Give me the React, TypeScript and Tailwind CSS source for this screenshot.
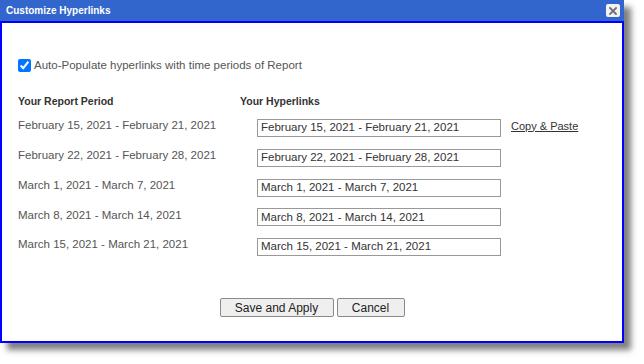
// Dialogo "Customize Hyperlinks": periodos del reporte y sus hipervinculos.

const PERIODS = [
  'February 15, 2021 - February 21, 2021',
  'February 22, 2021 - February 28, 2021',
  'March 1, 2021 - March 7, 2021',
  'March 8, 2021 - March 14, 2021',
  'March 15, 2021 - March 21, 2021',
]

export default function App() {
  return (
    <div
      className="w-[644px] h-[364px] bg-white"
      style={{ fontFamily: '"Liberation Sans", Arial, sans-serif' }}
    >
      <div className="w-[624px] shadow-[7px_7px_6px_rgba(0,0,0,0.5)]">

        {/* Barra de titulo */}
        <div className="h-[21px] bg-[#3366cc] flex items-center justify-between pl-[6px] pr-[4px]">
          <span className="text-[10px] font-bold text-white leading-none">
            Customize Hyperlinks
          </span>
          <div className="w-[14px] h-[13px] bg-[#f2f2f2] rounded-[2px] flex items-center justify-center">
            <svg width="8" height="8" viewBox="0 0 8 8">
              <path d="M1 1 L7 7 M7 1 L1 7" stroke="#6e6e6e" strokeWidth="1.8" strokeLinecap="square" />
            </svg>
          </div>
        </div>

        {/* Cuerpo */}
        <div className="h-[322px] border-2 border-[#0000ff] bg-white pl-[16px] flex flex-col">

          <label className="mt-[36px] flex items-center gap-[3px] h-[13px]">
            <input
              type="checkbox"
              checked
              readOnly
              className="w-[13px] h-[13px] m-0 accent-[#0075ff]"
            />
            <span className="text-[11.5px] text-[#555]">
              Auto-Populate hyperlinks with time periods of Report
            </span>
          </label>

          <div className="mt-[23px] flex h-[14px] items-center text-[10.5px] font-bold text-[#333]">
            <span className="w-[222px]">Your Report Period</span>
            <span>Your Hyperlinks</span>
          </div>

          <div className="mt-[10px] flex flex-col gap-[11.75px]">
            {PERIODS.map((p, i) => (
              <div key={p} className="flex items-center h-[18px]">
                <span className="w-[239px] text-[11.5px] text-[#555] mb-[4px]">{p}</span>
                <div className="w-[244px] h-[18px] border border-[#999] bg-white flex items-center pl-[3px] text-[11.5px] text-[#333]">
                  {p}
                </div>
                {i === 0 && (
                  <span className="ml-[10px] mb-[4px] text-[11px] text-[#333] underline">
                    Copy &amp; Paste
                  </span>
                )}
              </div>
            ))}
          </div>

          <div className="mt-[42px] pr-[16px] flex justify-center gap-[3px]">
            <button className="w-[114px] h-[19px] bg-[#efefef] border border-[#8a8a8a] rounded-[2px] text-[12px] text-[#222] leading-none">
              Save and Apply
            </button>
            <button className="w-[68px] h-[19px] bg-[#efefef] border border-[#8a8a8a] rounded-[2px] text-[12px] text-[#222] leading-none">
              Cancel
            </button>
          </div>

        </div>
      </div>
    </div>
  )
}
